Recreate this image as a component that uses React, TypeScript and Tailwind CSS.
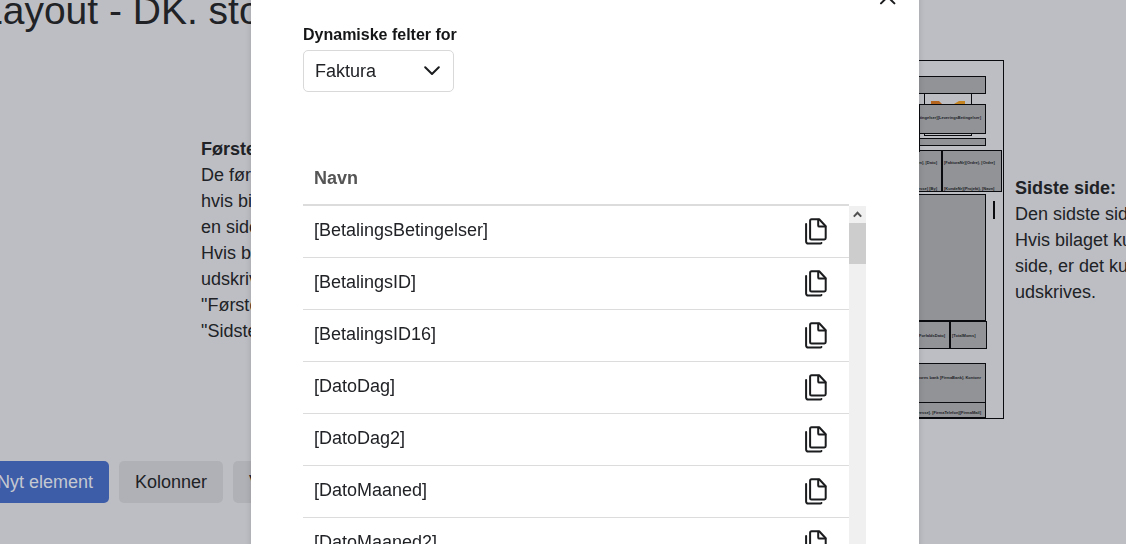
import { useState } from 'react';

interface Block {
  x: number;
  y: number;
  w: number;
  h: number;
  lines?: { text: string; y: number; right?: boolean }[];
}

const fields = [
  '[BetalingsBetingelser]',
  '[BetalingsID]',
  '[BetalingsID16]',
  '[DatoDag]',
  '[DatoDag2]',
  '[DatoMaaned]',
  '[DatoMaaned2]',
  '[DatoAar]',
];

// placed blocks on the last page, in preview pixels
const blocks: Block[] = [
  { x: 20, y: 15, w: 215, h: 18 },
  { x: 20, y: 43, w: 215, h: 30, lines: [{ text: '[LeveringsBetingelser][LeveringsBetingelser]', y: 10, right: true }] },
  { x: 20, y: 77, w: 215, h: 8 },
  {
    x: 20,
    y: 89,
    w: 171,
    h: 42,
    lines: [
      { text: '[FakturaNavn], [Dato]', y: 9, right: true },
      { text: '[FakturaAdresse] [By]', y: 35, right: true },
    ],
  },
  {
    x: 191,
    y: 89,
    w: 60,
    h: 42,
    lines: [
      { text: '[FakturaNr](Ordre), [Ordre]', y: 9 },
      { text: '[KundeNr](Projekt), [Navn]', y: 35 },
    ],
  },
  { x: 20, y: 133, w: 215, h: 127 },
  { x: 20, y: 260, w: 179, h: 28, lines: [{ text: 'Forfald: [ForfaldsDato]', y: 11, right: true }] },
  { x: 199, y: 260, w: 37, h: 28, lines: [{ text: '[TotalMoms]', y: 11 }] },
  { x: 20, y: 302, w: 215, h: 40, lines: [{ text: 'Betales til konto i vores bank [FirmaBank]. Kontonr', y: 11, right: true }] },
  { x: 20, y: 341, w: 215, h: 16, lines: [{ text: '[FirmaNavn][FirmaAdresse]. [FirmaTelefon][FirmaMail]', y: 7, right: true }] },
];

function CopyIcon() {
  return (
    <svg width="22" height="27" viewBox="0 0 22 27" fill="none" stroke="#1b1c1e" strokeWidth="2" strokeLinecap="round" strokeLinejoin="round">
      <path d="M6.6 1.2h7.6l6.5 7v11.9a1.3 1.3 0 0 1-1.3 1.3H6.6a1.5 1.5 0 0 1-1.5-1.5V2.7a1.5 1.5 0 0 1 1.5-1.5z" />
      <path d="M13.2 1.8v5.6a1.2 1.2 0 0 0 1.2 1.2h6" />
      <path d="M1.1 6v17.6a2 2 0 0 0 2 2h12.2q.8 0 1.1-.6" />
    </svg>
  );
}

function PagePreview() {
  return (
    <div className="relative h-[359px] w-[254px] shrink-0 border border-[#0a0b0f]">
      <div className="absolute top-[32px] left-[173px] h-[43px] w-[48px] border border-[#0a0b0f]">
        <svg width="46" height="41" viewBox="0 0 46 41">
          <path d="M6 7h8l3 3v12H6z" fill="#b5651d" />
          <path d="M40 7h-6l-5 3v12h11z" fill="#c58420" />
        </svg>
      </div>
      {blocks.map((block) => (
        <div
          key={`${block.x}-${block.y}`}
          className="absolute overflow-hidden border border-[#0a0b0f] bg-[#929397]"
          style={{ left: block.x, top: block.y, width: block.w, height: block.h }}
        >
          {block.lines?.map((line) => (
            <span
              key={line.text}
              className={`absolute text-[4px] leading-[5px] font-bold whitespace-nowrap ${line.right ? 'right-[4px]' : 'left-px'}`}
              style={{ top: line.y }}
            >
              {line.text}
            </span>
          ))}
        </div>
      ))}
      <div className="absolute top-[43px] left-[168px] h-[48px] w-px bg-[#0a0b0f]" />
      <div className="absolute top-[140px] left-[242px] h-[18px] w-[2px] bg-[#0a0b0f]" />
    </div>
  );
}

function FieldsDialog() {
  const [type, setType] = useState('Faktura');

  return (
    <div className="fixed inset-0 flex justify-center overflow-hidden pl-[44px]">
      <div role="dialog" aria-label="Dynamiske felter" className="-mt-5 h-fit w-[668px] shrink-0 bg-white px-[52px] pb-12 shadow-[0_0_6px_rgba(0,0,0,0.15)]">
        <div className="-mr-[31px] flex h-[45px] items-start justify-end pt-[7px]">
          <button type="button" aria-label="Luk" className="h-[20px] w-[20px]">
            <svg width="20" height="20" viewBox="0 0 20 20" fill="none" stroke="#1b1c1e" strokeWidth="2" strokeLinecap="round">
              <path d="M3 3l13.4 13.4M16.4 3L3 16.4" />
            </svg>
          </button>
        </div>

        <label htmlFor="type" className="block text-[16px] leading-5 font-bold text-[#151617]">
          Dynamiske felter for
        </label>
        <div className="relative mt-[5px] w-[151px]">
          <select
            id="type"
            value={type}
            onChange={(e) => setType(e.target.value)}
            className="h-[42px] w-full appearance-none rounded-[5px] border border-[#d9d9d9] bg-white pl-[11px] text-[18px]"
          >
            <option>Faktura</option>
            <option>Tilbud</option>
            <option>Ordre</option>
          </select>
          <svg className="pointer-events-none absolute top-[15px] right-[14px]" width="16" height="12" viewBox="0 0 16 12" fill="none" stroke="#1b1c1e" strokeWidth="2" strokeLinecap="round" strokeLinejoin="round">
            <path d="M1.2 2.2L8 9l6.8-6.8" />
          </svg>
        </div>

        <div className="mt-[60px] mr-px flex">
          <table className="flex-1 border-separate border-spacing-0 text-[18px]">
            <thead>
              <tr>
                <th colSpan={2} className="h-[54px] border-b-2 border-[#dcdcdc] pl-[11px] text-left text-[#555]">
                  Navn
                </th>
              </tr>
            </thead>
            <tbody>
              {fields.map((field) => (
                <tr key={field}>
                  <td className="h-[52px] border-b border-[#dcdcdc] pb-[3px] pl-[11px]">{field}</td>
                  <td className="w-[54px] border-b border-[#dcdcdc] pr-[22px]">
                    <button type="button" aria-label={`Kopier ${field}`} className="ml-auto block">
                      <CopyIcon />
                    </button>
                  </td>
                </tr>
              ))}
            </tbody>
          </table>
          <div className="mt-[54px] w-[17px] bg-[#f0f0f0]">
            <div className="flex h-[17px] items-center justify-center">
              <svg width="9" height="7" viewBox="0 0 9 7" fill="none" stroke="#505050" strokeWidth="2">
                <path d="M.8 5.6L4.5 1.8l3.7 3.8" />
              </svg>
            </div>
            <div className="h-[41px] bg-[#cdcdcd]" />
          </div>
        </div>
      </div>
    </div>
  );
}

export default function App() {
  return (
    <div className="min-h-screen overflow-hidden bg-[#bdbec4] font-['Liberation_Sans',Arial,sans-serif] text-[18px] leading-[26px] text-[#202226]">
      <main className="-mt-3 -ml-[19px] whitespace-nowrap">
        <h1 className="text-[39px] leading-[46px]">Layout - DK. stort logo</h1>

        <section className="mt-[26px] flex items-center">
          <div className="flex-1 pl-[220px]">
            <h2 className="font-bold">Første side:</h2>
            <p>
              De første
              <br />
              hvis bilag
              <br />
              en side.
              <br />
              Hvis bilag
              <br />
              udskrives
              <br />
              "Første"
              <br />
              "Sidste"
            </p>
          </div>
          <PagePreview />
          <div className="w-[122px] pl-[11px]">
            <h2 className="font-bold">Sidste side:</h2>
            <p>
              Den sidste side
              <br />
              Hvis bilaget kun
              <br />
              side, er det kun
              <br />
              udskrives.
            </p>
          </div>
        </section>

        <div className="mt-[42px] flex gap-[10px]">
          <button type="button" className="h-[42px] rounded-[5px] bg-[#3d5da9] px-4 text-[#c5c8d0]">
            Nyt element
          </button>
          <button type="button" className="h-[42px] rounded-[5px] bg-[#b0b1b6] px-4">
            Kolonner
          </button>
          <button type="button" className="h-[42px] rounded-[5px] bg-[#b0b1b6] px-4">
            Vis
          </button>
        </div>
      </main>

      <FieldsDialog />
    </div>
  );
}
